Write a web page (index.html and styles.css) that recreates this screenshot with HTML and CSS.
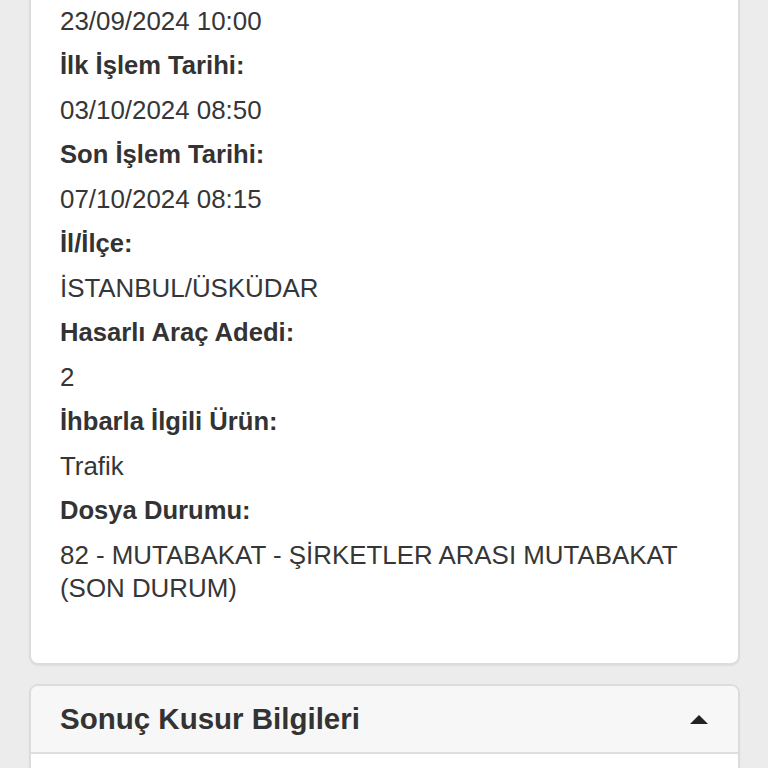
FILE: index.html
```html
<!DOCTYPE html>
<html lang="tr">
<head>
<meta charset="utf-8">
<link rel="stylesheet" href="styles.css">
</head>
<body>
<div class="page">
  <section class="card card-details">
    <dl class="info">
      <dt class="label">İhbar Tarihi:</dt>
      <dd class="value">23/09/2024 10:00</dd>
      <dt class="label">İlk İşlem Tarihi:</dt>
      <dd class="value">03/10/2024 08:50</dd>
      <dt class="label">Son İşlem Tarihi:</dt>
      <dd class="value">07/10/2024 08:15</dd>
      <dt class="label">İl/İlçe:</dt>
      <dd class="value">İSTANBUL/ÜSKÜDAR</dd>
      <dt class="label">Hasarlı Araç Adedi:</dt>
      <dd class="value">2</dd>
      <dt class="label">İhbarla İlgili Ürün:</dt>
      <dd class="value">Trafik</dd>
      <dt class="label">Dosya Durumu:</dt>
      <dd class="value">82 - MUTABAKAT - ŞİRKETLER ARASI MUTABAKAT (SON DURUM)</dd>
    </dl>
  </section>
  <section class="card card-collapsible">
    <header class="card-header">
      <h2 class="card-title">Sonuç Kusur Bilgileri</h2>
      <span class="caret" aria-hidden="true"></span>
    </header>
    <div class="card-body"></div>
  </section>
</div>
</body>
</html>
```
FILE: styles.css
```css
html, body {
  margin: 0;
  padding: 0;
  background: #ececed;
  overflow: hidden;
}
.page {
  padding: 0 28px 0 29px;
  margin-top: -52px;
  display: flex;
  flex-direction: column;
  gap: 19px;
}
.card {
  background: #fff;
  border: 2px solid #dcdcdc;
  border-radius: 9px;
  box-shadow: 0 1px 2px rgba(0,0,0,0.06);
}
.card-details {
  padding: 10px 29px 47px 29px;
}
.info {
  margin: 0;
}
.label, .value {
  margin: 0 0 11.5px 0;
  line-height: 33px;
  color: #333;
  font-family: "Liberation Sans", Arial, sans-serif;
}
.label {
  font-weight: 700;
  font-size: 25.6px;
}
.value {
  font-size: 25.9px;
  color: #363636;
}
.card-collapsible {
  overflow: hidden;
}
.card-header {
  display: flex;
  align-items: center;
  justify-content: space-between;
  height: 66px;
  padding: 0 29px;
  background: #f7f7f7;
  border-bottom: 2px solid #dedede;
}
.card-title {
  margin: 0;
  font-family: "Liberation Sans", Arial, sans-serif;
  font-weight: 700;
  font-size: 29.5px;
  color: #333;
}
.caret {
  width: 0;
  height: 0;
  border-left: 9px solid transparent;
  border-right: 9px solid transparent;
  border-bottom: 9px solid #222;
  margin-right: 1px;
}
.card-body {
  height: 80px;
  background: #fff;
}
```
